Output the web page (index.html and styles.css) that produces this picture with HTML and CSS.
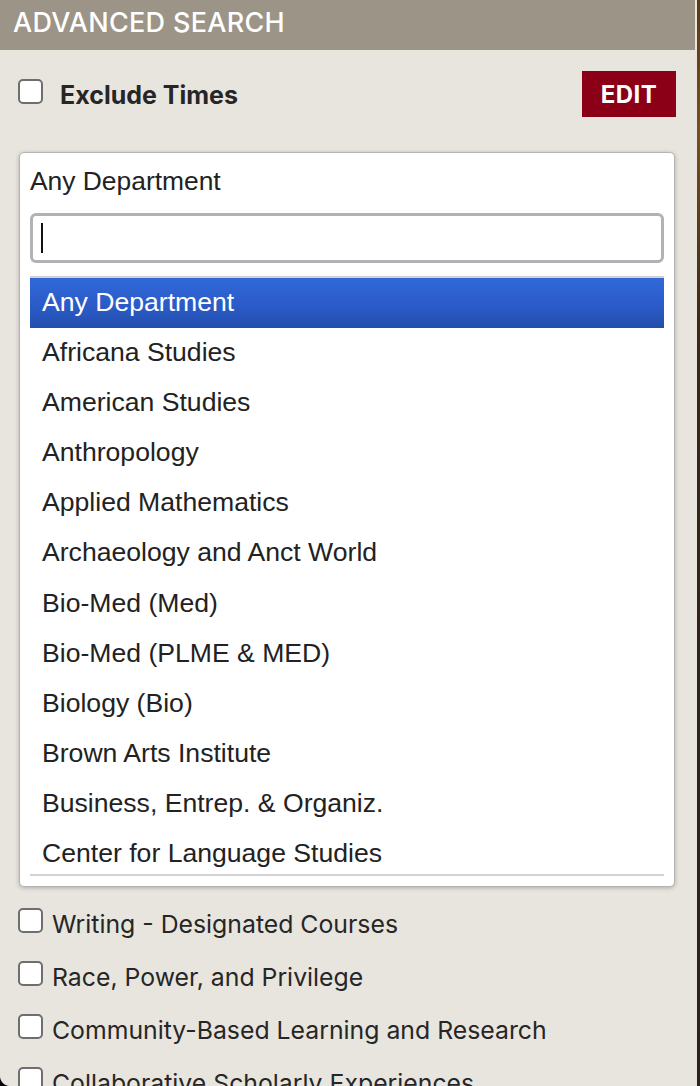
FILE: index.html
```html
<!DOCTYPE html>
<html lang="en">
<head>
<meta charset="utf-8">
<title>Advanced Search</title>
<link rel="stylesheet" href="styles.css">
</head>
<body>
<div class="page">
  <div class="panel">
    <div class="panel-header">ADVANCED SEARCH</div>
    <div class="exclude-row">
      <label class="exclude-label"><span class="checkbox"></span><span class="exclude-text">Exclude Times</span></label>
      <button class="edit-btn">EDIT</button>
    </div>
    <div class="dept-select">
      <div class="dept-current">Any Department</div>
      <div class="dept-search"><span class="caret"></span></div>
      <ul class="dept-list">
        <li class="dept-item active">Any Department</li>
        <li class="dept-item">Africana Studies</li>
        <li class="dept-item">American Studies</li>
        <li class="dept-item">Anthropology</li>
        <li class="dept-item">Applied Mathematics</li>
        <li class="dept-item">Archaeology and Anct World</li>
        <li class="dept-item">Bio-Med (Med)</li>
        <li class="dept-item">Bio-Med (PLME &amp; MED)</li>
        <li class="dept-item">Biology (Bio)</li>
        <li class="dept-item">Brown Arts Institute</li>
        <li class="dept-item">Business, Entrep. &amp; Organiz.</li>
        <li class="dept-item">Center for Language Studies</li>
      </ul>
    </div>
    <div class="options">
      <label class="option"><span class="checkbox"></span><span class="option-text">Writing - Designated Courses</span></label>
      <label class="option"><span class="checkbox"></span><span class="option-text">Race, Power, and Privilege</span></label>
      <label class="option"><span class="checkbox"></span><span class="option-text">Community-Based Learning and Research</span></label>
      <label class="option"><span class="checkbox"></span><span class="option-text">Collaborative Scholarly Experiences</span></label>
    </div>
  </div>
  <div class="edge-strip"></div>
  <div class="window-corner"></div>
</div>
</body>
</html>
```

FILE: styles.css
```css
html, body {
  margin: 0;
  padding: 0;
  background: #1a1410;
}

.page {
  position: relative;
  display: flex;
  width: 700px;
  height: 1086px;
  overflow: hidden;
}

.panel {
  width: 697px;
  height: 1086px;
  background: #e8e5df;
  overflow: hidden;
  font-family: "Inter", "Liberation Sans", sans-serif;
  color: #262626;
}

.edge-strip {
  width: 3px;
  height: 1086px;
  background: linear-gradient(to bottom, #5a3a16 0%, #7a4e1c 12%, #3d2914 30%, #2e241e 60%, #2a221d 100%);
}

.panel-header {
  margin-right: 2px;
  height: 50px;
  box-sizing: border-box;
  padding: 0 0 4px 13px;
  line-height: 46px;
  background: #9b9487;
  color: #ffffff;
  font-size: 27px;
  font-weight: 500;
  letter-spacing: 0.3px;
}

.exclude-row {
  display: flex;
  align-items: center;
  justify-content: space-between;
  margin-top: 21px;
  padding: 0 21px 0 18px;
  height: 46px;
}

.exclude-label {
  display: block;
  line-height: 30px;
  margin-top: 4px;
}

.checkbox {
  display: inline-block;
  box-sizing: border-box;
  width: 25px;
  height: 25px;
  border: 2px solid #6e6e6e;
  border-radius: 5px;
  background: #ffffff;
  vertical-align: baseline;
}

.exclude-text {
  margin-left: 17px;
  font-size: 25px;
  font-weight: 700;
  color: #262626;
}

.edit-btn {
  width: 94px;
  height: 46px;
  border: none;
  background: #8b0016;
  color: #ffffff;
  font-family: "Inter", "Liberation Sans", sans-serif;
  font-size: 24px;
  font-weight: 700;
  padding: 0;
  letter-spacing: 0.5px;
}

.dept-select {
  margin: 35px 0 0 19px;
  width: 656px;
  box-sizing: border-box;
  height: 735px;
  border: 1px solid #b4b4b4;
  border-radius: 5px;
  background: #ffffff;
  box-shadow: 0 1px 4px rgba(0, 0, 0, 0.25);
  padding: 12px 10px 0 10px;
  font-family: "Liberation Sans", Arial, sans-serif;
  color: #222222;
}

.dept-current {
  font-size: 26.4px;
  line-height: 30px;
  margin-top: 1px;
}

.dept-search {
  margin-top: 17px;
  height: 50px;
  box-sizing: border-box;
  border: 3px solid #b2b2b6;
  border-radius: 6px;
  background: #ffffff;
  display: flex;
  align-items: center;
  padding-left: 8px;
}

.caret {
  display: block;
  width: 1.5px;
  height: 30px;
  background: #111111;
}

.dept-list {
  list-style: none;
  margin: 13px 0 0 0;
  padding: 0;
  height: 596px;
  overflow: hidden;
  border-top: 2px solid #d2d2d4;
  border-bottom: 2px solid #d2d2d4;
}

.dept-item {
  height: 50.1px;
  box-sizing: border-box;
  padding-left: 12px;
  font-size: 26.6px;
  line-height: 48px;
  color: #222222;
  white-space: nowrap;
}

.dept-item.active {
  background: linear-gradient(to bottom, #3068d8 0%, #2a5ac6 60%, #234eac 100%);
  color: #ffffff;
}

.options {
  margin-top: 11px;
  padding-left: 18px;
}

.option {
  display: block;
  height: 53px;
  line-height: 53px;
  white-space: nowrap;
}

.option-text {
  margin-left: 9px;
  font-size: 24.8px;
  color: #262626;
}

.window-corner {
  position: absolute;
  left: 0;
  bottom: 0;
  width: 10px;
  height: 10px;
  background: radial-gradient(circle at 10px 0, transparent 9.5px, #000000 10.5px);
}
```
